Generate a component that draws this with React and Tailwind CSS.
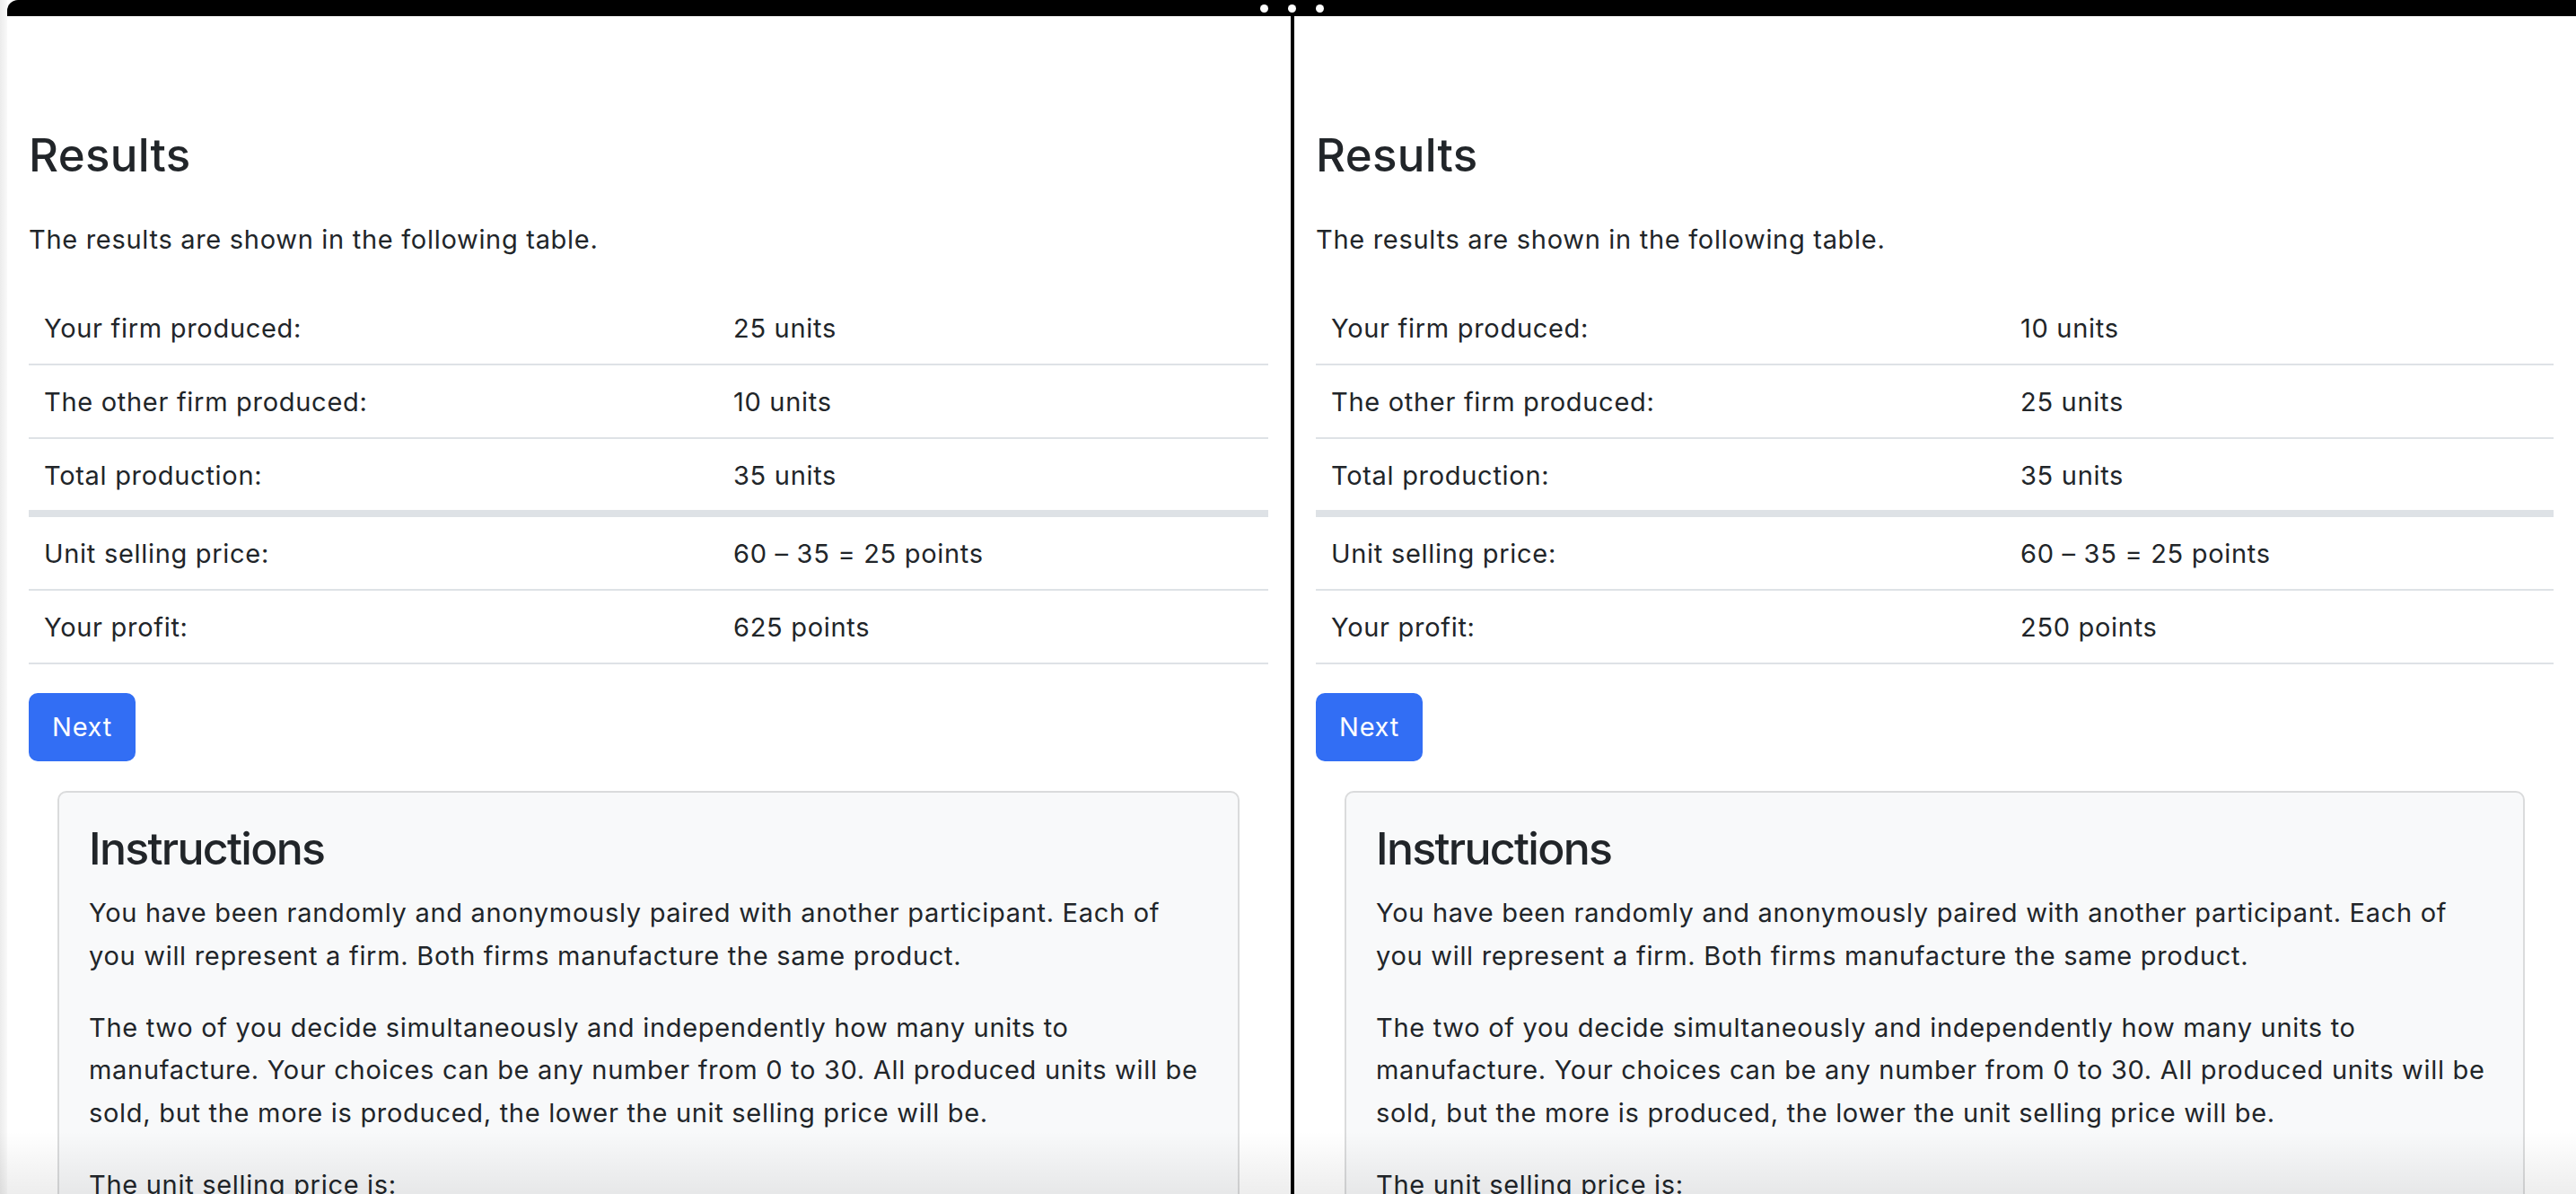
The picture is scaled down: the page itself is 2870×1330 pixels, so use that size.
import React from "react";

const rowsLeft = [
  ["Your firm produced:", "25 units"],
  ["The other firm produced:", "10 units"],
  ["Total production:", "35 units"],
  ["Unit selling price:", "60 – 35 = 25 points"],
  ["Your profit:", "625 points"],
];

const rowsRight = [
  ["Your firm produced:", "10 units"],
  ["The other firm produced:", "25 units"],
  ["Total production:", "35 units"],
  ["Unit selling price:", "60 – 35 = 25 points"],
  ["Your profit:", "250 points"],
];

function Row({ label, value, thick }) {
  return (
    <div
      className={
        "flex items-start pt-[20px] " +
        (thick ? "h-[87px] border-b-[8px] border-[#dee2e6]" : "h-[82px] border-b-2 border-[#dee2e6]")
      }
    >
      <div className="w-[768px] shrink-0 px-[17px] leading-[42px]">{label}</div>
      <div className="flex-1 px-[17px] leading-[42px]">{value}</div>
    </div>
  );
}

function Panel({ rows, className }) {
  return (
    <div className={"flex flex-col pl-[24px] pr-[25px] pt-[124px] " + className}>
      <h2 className="text-[51px] font-medium leading-[62px] tracking-[0.3px] mb-[42px]">Results</h2>
      <p className="leading-[42px] mb-[37px]">The results are shown in the following table.</p>
      <div className="flex flex-col">
        {rows.map((r, i) => (
          <Row key={i} label={r[0]} value={r[1]} thick={i === 2} />
        ))}
      </div>
      <div className="mt-[32px]">
        <button className="w-[119px] h-[76px] rounded-[10px] bg-[#326ef4] text-white flex items-center justify-center leading-[42px]">
          Next
        </button>
      </div>
      <div className="mt-[33px] mx-[32px] border-2 border-[#dadbdc] rounded-[10px] bg-[#f8f9fa] px-[33px] pt-[31px] pb-[40px]">
        <h3 className="text-[50px] font-medium leading-[62px] tracking-[-1.7px] mb-[17px]">Instructions</h3>
        <p className="leading-[47.5px] mb-[32.5px]">
          You have been randomly and anonymously paired with another participant. Each of you will
          represent a firm. Both firms manufacture the same product.
        </p>
        <p className="leading-[47.5px] mb-[32.5px]">
          The two of you decide simultaneously and independently how many units to manufacture. Your
          choices can be any number from 0 to 30. All produced units will be sold, but the more is
          produced, the lower the unit selling price will be.
        </p>
        <p className="leading-[47.5px] mb-[32.5px]">The unit selling price is:</p>
      </div>
    </div>
  );
}

export default function App() {
  return (
    <div
      className="relative w-[2870px] h-[1330px] overflow-hidden bg-white flex text-[29px] tracking-[0.7px] text-[#212529]"
      style={{ fontFamily: 'Inter, "Noto Sans", sans-serif' }}
    >
      <div className="w-[8px] shrink-0 bg-gradient-to-r from-[#ececec] to-[#f9f9f9]" />
      <div className="flex-1 flex flex-col min-w-0">
        <div className="h-[18px] shrink-0 bg-black rounded-tl-[12px] flex items-center justify-center gap-[22px]">
          <span className="w-[9px] h-[9px] rounded-full bg-white" />
          <span className="w-[9px] h-[9px] rounded-full bg-white" />
          <span className="w-[9px] h-[9px] rounded-full bg-white" />
        </div>
        <div className="flex-1 flex min-h-0">
          <Panel rows={rowsLeft} className="w-[1430px] shrink-0" />
          <div className="w-[4px] shrink-0 bg-black" />
          <Panel rows={rowsRight} className="flex-1 min-w-0" />
        </div>
      </div>
      <div className="pointer-events-none absolute left-0 right-0 bottom-0 h-[70px] bg-gradient-to-b from-transparent to-[#000000]/[0.07]" />
    </div>
  );
}
